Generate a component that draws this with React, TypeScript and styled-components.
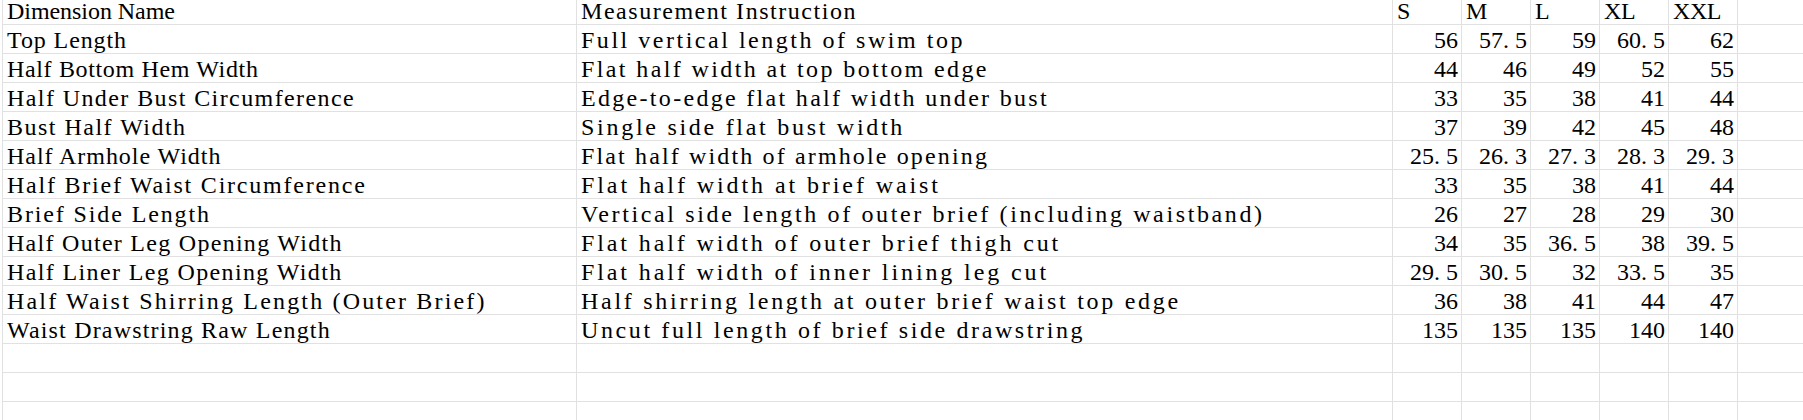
import React, { useMemo } from "react";
import styled, { createGlobalStyle } from "styled-components";

const GlobalStyle = createGlobalStyle`
  html, body {
    margin: 0;
    padding: 0;
    background: #ffffff;
    overflow: hidden;
  }
`;

const FONT = '24px "Liberation Serif", "Times New Roman", serif';
// the sheet font is monospaced: every character takes 12px
const CHAR_WIDTH = 12;

const SIZES = ["S", "M", "L", "XL", "XXL"];

const ROWS: [string, string, string[]][] = [
  ["Top Length", "Full vertical length of swim top", ["56", "57.5", "59", "60.5", "62"]],
  ["Half Bottom Hem Width", "Flat half width at top bottom edge", ["44", "46", "49", "52", "55"]],
  ["Half Under Bust Circumference", "Edge-to-edge flat half width under bust", ["33", "35", "38", "41", "44"]],
  ["Bust Half Width", "Single side flat bust width", ["37", "39", "42", "45", "48"]],
  ["Half Armhole Width", "Flat half width of armhole opening", ["25.5", "26.3", "27.3", "28.3", "29.3"]],
  ["Half Brief Waist Circumference", "Flat half width at brief waist", ["33", "35", "38", "41", "44"]],
  [
    "Brief Side Length",
    "Vertical side length of outer brief (including waistband)",
    ["26", "27", "28", "29", "30"],
  ],
  ["Half Outer Leg Opening Width", "Flat half width of outer brief thigh cut", ["34", "35", "36.5", "38", "39.5"]],
  ["Half Liner Leg Opening Width", "Flat half width of inner lining leg cut", ["29.5", "30.5", "32", "33.5", "35"]],
  [
    "Half Waist Shirring Length (Outer Brief)",
    "Half shirring length at outer brief waist top edge",
    ["36", "38", "41", "44", "47"],
  ],
  ["Waist Drawstring Raw Length", "Uncut full length of brief side drawstring", ["135", "135", "135", "140", "140"]],
];

const EMPTY_ROWS = 3;

let ctx: CanvasRenderingContext2D | null = null;
function measure(text: string) {
  if (!ctx) {
    ctx = document.createElement("canvas").getContext("2d");
    if (ctx) ctx.font = FONT;
  }
  return ctx ? ctx.measureText(text).width : text.length * CHAR_WIDTH;
}

const Sheet = styled.div`
  display: grid;
  grid-template-columns: 574px 816px repeat(6, 69px);
  grid-auto-rows: 29px;
  grid-template-rows: 25px;
  margin-left: 2px;
  border-left: 1px solid #e1e1e1;
  width: max-content;
`;

const Cell = styled.div<{ $numeric?: boolean }>`
  box-sizing: border-box;
  border-right: 1px solid #e1e1e1;
  border-bottom: 1px solid #e1e1e1;
  display: flex;
  align-items: flex-end;
  justify-content: ${(p) => (p.$numeric ? "flex-end" : "flex-start")};
  padding: ${(p) => (p.$numeric ? "0 3px 1px 0" : "0 0 1px 4px")};
  white-space: nowrap;
  color: #000000;
  font: ${FONT};
  line-height: 23px;
`;

const Dot = styled.span`
  letter-spacing: 6px;
`;

// spread a proportional serif out to the width the monospaced sheet font gives
function MonoText({ text }: { text: string }) {
  const spacing = useMemo(
    () => Math.max(-0.4, (text.length * CHAR_WIDTH - measure(text)) / text.length),
    [text]
  );
  return <span style={{ letterSpacing: `${spacing.toFixed(2)}px` }}>{text}</span>;
}

function NumberText({ value }: { value: string }) {
  const [whole, frac] = value.split(".");
  if (frac === undefined) return <>{whole}</>;
  return (
    <>
      {whole}
      <Dot>.</Dot>
      {frac}
    </>
  );
}

export default function App() {
  return (
    <>
      <GlobalStyle />
      <Sheet>
        <Cell>
          <MonoText text="Dimension Name" />
        </Cell>
        <Cell>
          <MonoText text="Measurement Instruction" />
        </Cell>
        {SIZES.map((s) => (
          <Cell key={s}>
            <MonoText text={s} />
          </Cell>
        ))}
        <Cell />

        {ROWS.map(([name, instruction, values]) => (
          <React.Fragment key={name}>
            <Cell>
              <MonoText text={name} />
            </Cell>
            <Cell>
              <MonoText text={instruction} />
            </Cell>
            {values.map((v, i) => (
              <Cell key={i} $numeric>
                <NumberText value={v} />
              </Cell>
            ))}
            <Cell />
          </React.Fragment>
        ))}

        {Array.from({ length: EMPTY_ROWS * 8 }).map((_, i) => (
          <Cell key={`e${i}`} />
        ))}
      </Sheet>
    </>
  );
}
